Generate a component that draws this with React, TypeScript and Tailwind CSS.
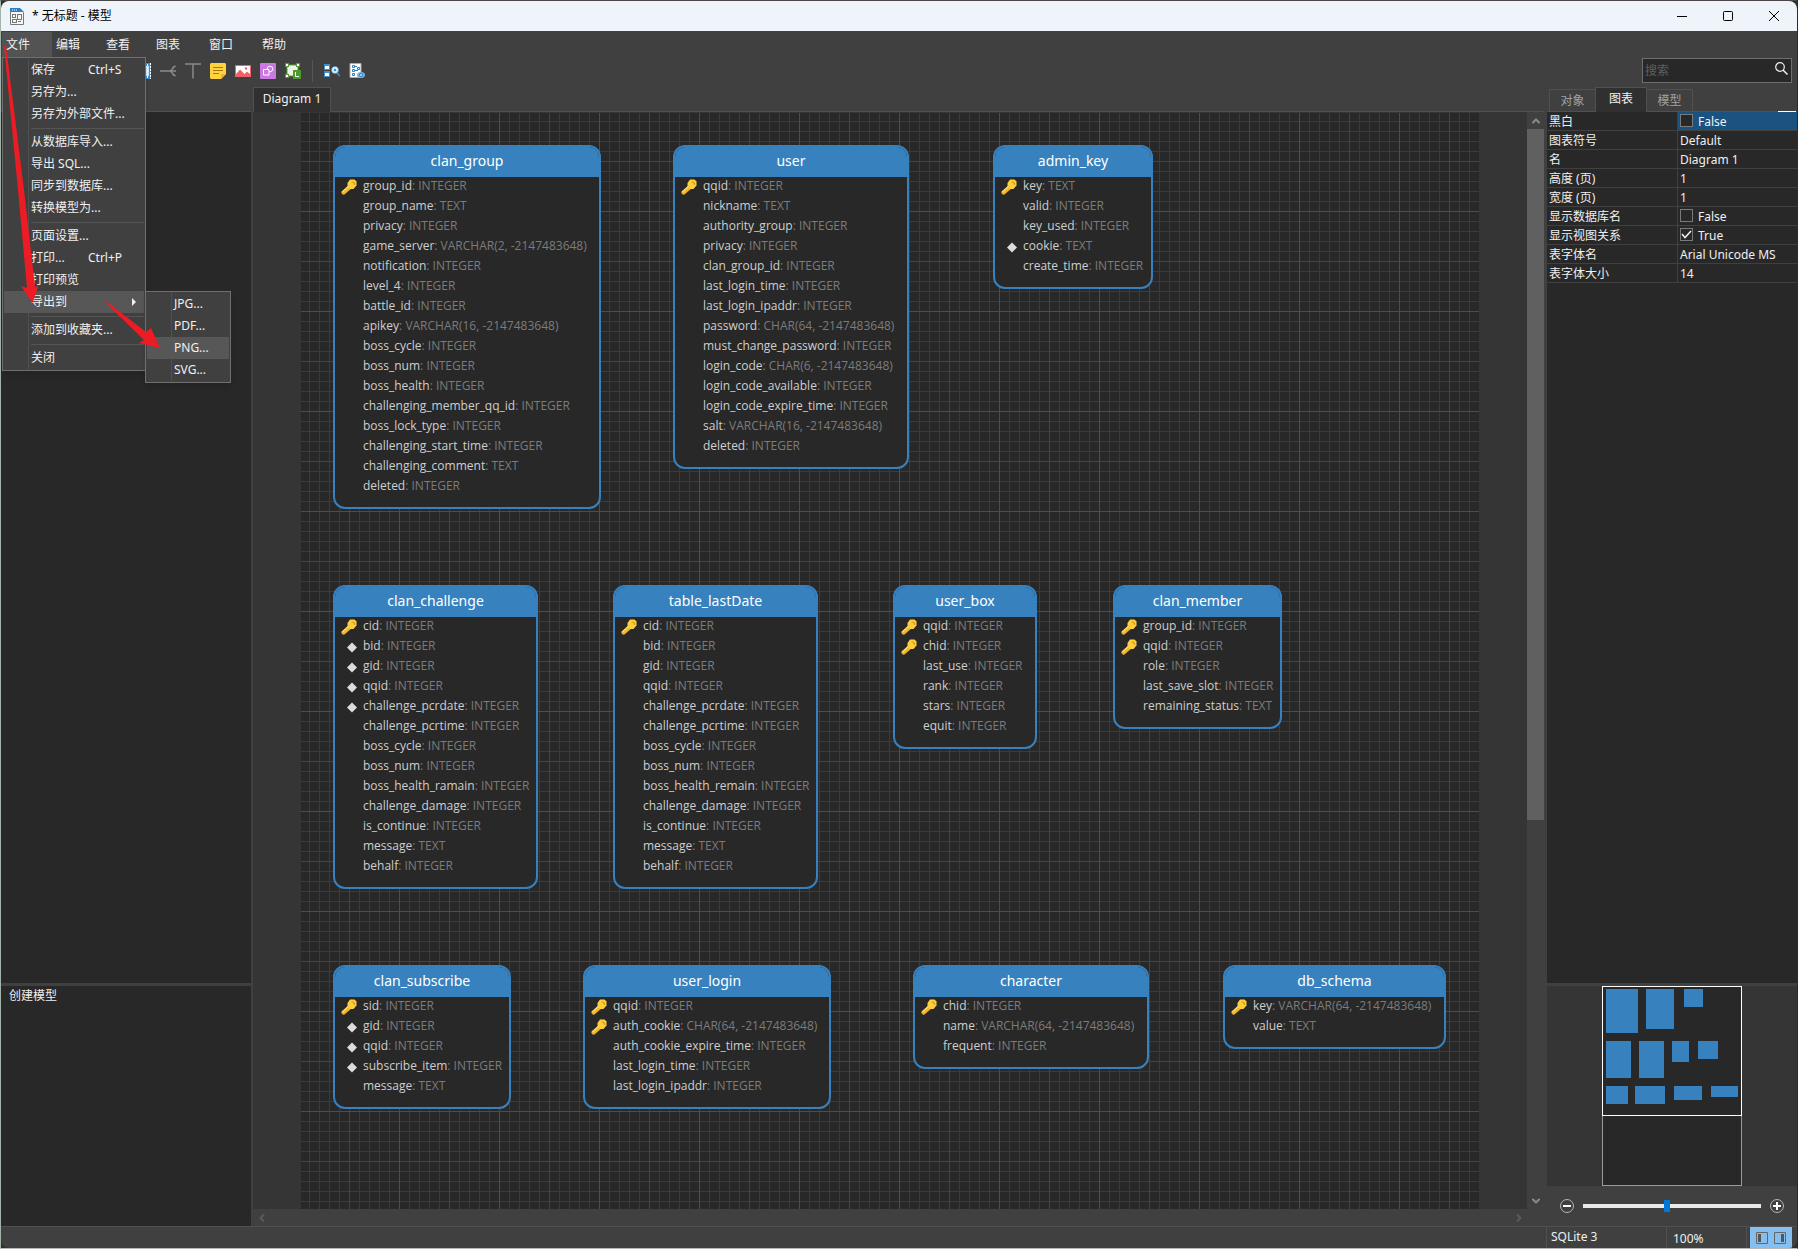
import type { ReactNode } from 'react';
import { ChevronDown, ChevronLeft, ChevronRight, ChevronUp } from 'lucide-react';

type Mark = 'key' | 'index' | '';
type Column = [name: string, type: string, mark?: Mark];

interface Entity {
  name: string;
  x: number;
  y: number;
  width: number;
  columns: Column[];
}

const INT = 'INTEGER';

const ENTITIES: Entity[] = [
  {
    name: 'clan_group', x: 32, y: 32, width: 268,
    columns: [
      ['group_id', INT, 'key'],
      ['group_name', 'TEXT'],
      ['privacy', INT],
      ['game_server', 'VARCHAR(2, -2147483648)'],
      ['notification', INT],
      ['level_4', INT],
      ['battle_id', INT],
      ['apikey', 'VARCHAR(16, -2147483648)'],
      ['boss_cycle', INT],
      ['boss_num', INT],
      ['boss_health', INT],
      ['challenging_member_qq_id', INT],
      ['boss_lock_type', INT],
      ['challenging_start_time', INT],
      ['challenging_comment', 'TEXT'],
      ['deleted', INT],
    ],
  },
  {
    name: 'user', x: 372, y: 32, width: 236,
    columns: [
      ['qqid', INT, 'key'],
      ['nickname', 'TEXT'],
      ['authority_group', INT],
      ['privacy', INT],
      ['clan_group_id', INT],
      ['last_login_time', INT],
      ['last_login_ipaddr', INT],
      ['password', 'CHAR(64, -2147483648)'],
      ['must_change_password', INT],
      ['login_code', 'CHAR(6, -2147483648)'],
      ['login_code_available', INT],
      ['login_code_expire_time', INT],
      ['salt', 'VARCHAR(16, -2147483648)'],
      ['deleted', INT],
    ],
  },
  {
    name: 'admin_key', x: 692, y: 32, width: 160,
    columns: [
      ['key', 'TEXT', 'key'],
      ['valid', INT],
      ['key_used', INT],
      ['cookie', 'TEXT', 'index'],
      ['create_time', INT],
    ],
  },
  {
    name: 'clan_challenge', x: 32, y: 472, width: 205,
    columns: [
      ['cid', INT, 'key'],
      ['bid', INT, 'index'],
      ['gid', INT, 'index'],
      ['qqid', INT, 'index'],
      ['challenge_pcrdate', INT, 'index'],
      ['challenge_pcrtime', INT],
      ['boss_cycle', INT],
      ['boss_num', INT],
      ['boss_health_ramain', INT],
      ['challenge_damage', INT],
      ['is_continue', INT],
      ['message', 'TEXT'],
      ['behalf', INT],
    ],
  },
  {
    name: 'table_lastDate', x: 312, y: 472, width: 205,
    columns: [
      ['cid', INT, 'key'],
      ['bid', INT],
      ['gid', INT],
      ['qqid', INT],
      ['challenge_pcrdate', INT],
      ['challenge_pcrtime', INT],
      ['boss_cycle', INT],
      ['boss_num', INT],
      ['boss_health_remain', INT],
      ['challenge_damage', INT],
      ['is_continue', INT],
      ['message', 'TEXT'],
      ['behalf', INT],
    ],
  },
  {
    name: 'user_box', x: 592, y: 472, width: 144,
    columns: [
      ['qqid', INT, 'key'],
      ['chid', INT, 'key'],
      ['last_use', INT],
      ['rank', INT],
      ['stars', INT],
      ['equit', INT],
    ],
  },
  {
    name: 'clan_member', x: 812, y: 472, width: 169,
    columns: [
      ['group_id', INT, 'key'],
      ['qqid', INT, 'key'],
      ['role', INT],
      ['last_save_slot', INT],
      ['remaining_status', 'TEXT'],
    ],
  },
  {
    name: 'clan_subscribe', x: 32, y: 852, width: 178,
    columns: [
      ['sid', INT, 'key'],
      ['gid', INT, 'index'],
      ['qqid', INT, 'index'],
      ['subscribe_item', INT, 'index'],
      ['message', 'TEXT'],
    ],
  },
  {
    name: 'user_login', x: 282, y: 852, width: 248,
    columns: [
      ['qqid', INT, 'key'],
      ['auth_cookie', 'CHAR(64, -2147483648)', 'key'],
      ['auth_cookie_expire_time', INT],
      ['last_login_time', INT],
      ['last_login_ipaddr', INT],
    ],
  },
  {
    name: 'character', x: 612, y: 852, width: 236,
    columns: [
      ['chid', INT, 'key'],
      ['name', 'VARCHAR(64, -2147483648)'],
      ['frequent', INT],
    ],
  },
  {
    name: 'db_schema', x: 922, y: 852, width: 223,
    columns: [
      ['key', 'VARCHAR(64, -2147483648)', 'key'],
      ['value', 'TEXT'],
    ],
  },
];

const MENUS = [
  { label: '文件', width: 'w-[50px]' },
  { label: '编辑', width: 'w-[50px]' },
  { label: '查看', width: 'w-[50px]' },
  { label: '图表', width: 'w-[53px]' },
  { label: '窗口', width: 'w-[53px]' },
  { label: '帮助', width: 'w-[53px]' },
];

interface MenuEntry {
  label: string;
  shortcut?: string;
  active?: boolean;
  submenu?: MenuEntry[];
}

const EXPORT_MENU: MenuEntry[] = [
  { label: 'JPG...' },
  { label: 'PDF...' },
  { label: 'PNG...', active: true },
  { label: 'SVG...' },
];

// null is a separator line
const FILE_MENU: (MenuEntry | null)[] = [
  { label: '保存', shortcut: 'Ctrl+S' },
  { label: '另存为...' },
  { label: '另存为外部文件...' },
  null,
  { label: '从数据库导入...' },
  { label: '导出 SQL...' },
  { label: '同步到数据库...' },
  { label: '转换模型为...' },
  null,
  { label: '页面设置...' },
  { label: '打印...', shortcut: 'Ctrl+P' },
  { label: '打印预览' },
  { label: '导出到', active: true, submenu: EXPORT_MENU },
  null,
  { label: '添加到收藏夹...' },
  null,
  { label: '关闭' },
];

const PROPERTIES: { label: string; value: string; checked?: boolean }[] = [
  { label: '黑白', value: 'False', checked: false },
  { label: '图表符号', value: 'Default' },
  { label: '名', value: 'Diagram 1' },
  { label: '高度 (页)', value: '1' },
  { label: '宽度 (页)', value: '1' },
  { label: '显示数据库名', value: 'False', checked: false },
  { label: '显示视图关系', value: 'True', checked: true },
  { label: '表字体名', value: 'Arial Unicode MS' },
  { label: '表字体大小', value: '14' },
];

export default function App() {
  return (
    <div className="h-screen bg-[#26332b] border border-t-[#4a4648] border-l-[#a3b5a8] border-r-[#2b2b2b] border-b-[#b9b9b9] font-['Noto_Sans','Noto_Sans_CJK_SC',sans-serif] text-xs text-[#f0f0f0]">
      <div className="h-full flex flex-col rounded-lg overflow-hidden bg-[#404040]">
        <TitleBar />
        <MenuBar />
        <Toolbar />
        <div className="flex-1 min-h-0 flex">
          <LeftPanel />
          <DiagramArea />
          <RightPanel />
        </div>
        <StatusBar />
      </div>
      <PointerArrows />
    </div>
  );
}

function TitleBar() {
  return (
    <header className="h-[30px] shrink-0 flex items-center bg-[#eef4f9] text-black pl-[9px]">
      <svg width="14" height="17" viewBox="0 0 14 17" className="mt-px">
        <path d="M.5 .5h9l4 4v12H.5z" fill="#f6f6f6" stroke="#777" />
        <path d="M0 0h10l4 4H0z" fill="#2a7fc4" />
        <path d="M2 2h1M4 2h1M6 2h1" stroke="#fff" />
        <g fill="none" stroke="#777">
          <rect x="2.5" y="6.5" width="3" height="3" />
          <rect x="7.5" y="6.5" width="4" height="5" />
          <rect x="2.5" y="11.5" width="4" height="3" />
          <path d="M8 13.5h3" />
        </g>
      </svg>
      <h1 className="ml-2">* 无标题 - 模型</h1>
      <div className="ml-auto flex h-full">
        <button aria-label="最小化" className="w-[46px] flex items-center justify-center">
          <svg width="10" height="10"><path d="M0 5.5h10" stroke="#000" /></svg>
        </button>
        <button aria-label="最大化" className="w-[46px] flex items-center justify-center">
          <svg width="10" height="10"><rect x=".5" y=".5" width="9" height="9" rx="1" fill="none" stroke="#000" /></svg>
        </button>
        <button aria-label="关闭窗口" className="w-[46px] flex items-center justify-center">
          <svg width="10" height="10"><path d="M0 0l10 10M10 0L0 10" stroke="#000" /></svg>
        </button>
      </div>
    </header>
  );
}

function MenuBar() {
  return (
    <nav className="h-[26px] shrink-0 flex pt-px pl-px">
      {MENUS.map((menu, i) => (
        <div key={menu.label} className="relative">
          <button className={`${menu.width} h-full pl-1 text-left ${i === 0 ? 'bg-[#535353]' : ''}`}>
            {menu.label}
          </button>
          {i === 0 && (
            <div className="absolute left-0 top-full z-20 w-[144px]">
              <Menu items={FILE_MENU} />
            </div>
          )}
        </div>
      ))}
    </nav>
  );
}

function Menu({ items }: { items: (MenuEntry | null)[] }) {
  return (
    <ul className="relative border border-[#707070] bg-[#404040] p-px shadow-md">
      <li aria-hidden className="absolute inset-y-px left-[25px] w-px bg-[#505050]" />
      {items.map((item, i) =>
        item ? (
          <li key={item.label} className={`relative ${item.active ? 'bg-[#575757]' : ''}`}>
            <button className="h-[22px] w-full flex items-center pl-[27px] text-left whitespace-nowrap">
              {item.label}
              {item.shortcut && <span className="ml-auto w-14">{item.shortcut}</span>}
              {item.submenu && (
                <svg width="4" height="8" className="ml-auto mr-2"><path d="M0 0l4 4-4 4z" fill="#f0f0f0" /></svg>
              )}
            </button>
            {item.submenu && (
              <div className="absolute left-full top-0 ml-px w-[86px]">
                <Menu items={item.submenu} />
              </div>
            )}
          </li>
        ) : (
          <li key={i} className="h-[6px] flex items-center pl-[27px]">
            <hr className="w-full border-[#555]" />
          </li>
        ),
      )}
    </ul>
  );
}

function ToolButton({ label, children }: { label: string; children: ReactNode }) {
  return (
    <button aria-label={label} className="size-4">
      <svg width="16" height="16" viewBox="0 0 16 16" fill="none">{children}</svg>
    </button>
  );
}

function Toolbar() {
  return (
    <div className="h-[30px] shrink-0 flex items-start justify-between pl-[134px] pr-[5px]">
      <div className="flex items-center gap-[9px] h-7">
        <ToolButton label="表">
          <path d="M0 0h16v16H0z" fill="#3d8fd1" />
          <path d="M2 3h12v10H2z" fill="#cfe6f8" />
          <path d="M12.500 1v14M15.500 0v16" stroke="#fff" strokeDasharray="2 1" />
        </ToolButton>
        <ToolButton label="关系">
          <path d="M0 8h16M10 8l3-2.500V4.500L15.500 3M10 8l3 2.500v1l2.500 1.500" stroke="#8a8a8a" strokeWidth="1.500" />
        </ToolButton>
        <ToolButton label="文本">
          <path d="M0 1h16M8 1v14.500" stroke="#8a8a8a" strokeWidth="1.500" />
        </ToolButton>
        <ToolButton label="注释">
          <path d="M1 0h14l1 1v10l-5 5H1l-1-1V1z" fill="#ffd23e" />
          <path d="M11 16v-4l1-1h4z" fill="#eab526" />
          <path d="M3 4.500h10M3 7.500h10M3 10.500h6" stroke="#a37a10" />
        </ToolButton>
        <ToolButton label="图像">
          <path d="M0 2h16v12H0z" fill="#f2606a" />
          <path d="M1 3h14v8l-3-2.500L9.500 11 5 6.500 1 11z" fill="#fff" />
          <circle cx="11" cy="5.500" r="1.200" fill="#f2606a" />
        </ToolButton>
        <ToolButton label="图形">
          <rect width="16" height="16" rx="1" fill="#cb78e3" />
          <circle cx="10" cy="6" r="2.800" stroke="#fff" />
          <path d="M3.500 6.500h5.500v5.500H3.500z" fill="#cb78e3" stroke="#fff" />
        </ToolButton>
        <ToolButton label="层">
          <path d="M2 2h11v11H2z" fill="#eef3e8" stroke="#5a9a3a" />
          <path d="M0 0h4v4H0zM11 0h4v4h-4zM0 11h4v4H0z" fill="#5a9a3a" />
          <path d="M1 1h2v2H1zM12 1h2v2h-2zM1 12h2v2H1z" fill="#fff" />
          <path d="M8 7h8v9H8z" fill="#4f9a2c" />
          <path d="M10.500 9v4.500H14" stroke="#fff" />
        </ToolButton>
        <span className="w-[5px] h-[22px] flex justify-center"><span className="w-px bg-[#555]" /></span>
        <ToolButton label="自动调整">
          <path d="M0 1h6v6H0zM0 8h6v6H0z" fill="#3d8fd1" />
          <path d="M1 3h4v3H1zM1 10h4v3H1z" fill="#fff" />
          <circle cx="11" cy="7" r="3.500" fill="#d9ecfa" stroke="#3d8fd1" strokeDasharray="2 1" />
          <circle cx="11" cy="7" r="1.200" fill="#3d8fd1" />
          <path d="M13 10l3 3" stroke="#3d8fd1" strokeWidth="1.500" />
        </ToolButton>
        <ToolButton label="预览">
          <path d="M1 .500h11v14H1z" fill="#fff" stroke="#aaa" />
          <g stroke="#2f7fbf">
            <path d="M3.500 2.500h2v2h-2zM3.500 6.500h2v2h-2zM3.500 10.500h2v2h-2zM8.500 4.500h2v2h-2z" />
            <path d="M6 3.500h2M6 7.500h3" />
          </g>
          <ellipse cx="12" cy="12" rx="4" ry="3" fill="#6db2e6" />
          <circle cx="12" cy="12" r="1.500" fill="#d9ecfa" stroke="#2f7fbf" />
        </ToolButton>
      </div>
      <label className="mt-px flex w-[150px] h-[25px] border border-[#6e6e6e] bg-[#282828]">
        <input type="text" aria-label="搜索" placeholder="搜索" className="min-w-0 flex-1 bg-transparent pl-0.5 outline-none placeholder:text-[#5f5f5f]" />
        <svg width="13" height="13" viewBox="0 0 13 13" className="mt-[3px] mr-[3px]" fill="none" stroke="#f0f0f0">
          <circle cx="5" cy="5" r="4.300" strokeWidth="1.200" />
          <path d="M8 8l4.500 4.500" strokeWidth="1.500" />
        </svg>
      </label>
    </div>
  );
}

function LeftPanel() {
  return (
    <aside className="w-[250px] shrink-0 mr-0.5 flex flex-col">
      <div className="h-[25px] shrink-0 border-b border-[#505050]" />
      <div className="flex-1 bg-[#282828]" />
      <section className="h-[243px] shrink-0 border-t-[3px] border-[#404040] bg-[#282828] pt-0.5">
        <h2 className="pl-2">创建模型</h2>
      </section>
    </aside>
  );
}

function DiagramArea() {
  return (
    <main className="flex-1 min-w-0 flex flex-col">
      <div className="h-[25px] shrink-0 flex">
        <button className="w-[78px] border border-b-0 border-[#505050] bg-[#303030] pb-0.5">Diagram 1</button>
        <div className="flex-1 border-b border-[#505050]" />
      </div>
      <div className="flex-1 min-h-0 flex">
        <div className="flex-1 min-w-0 flex px-12 pt-px bg-[#353535]">
          <div className="relative flex-1 overflow-hidden bg-[#282828]">
            <Grid />
            {ENTITIES.map((entity) => (
              <EntityCard key={entity.name} entity={entity} />
            ))}
          </div>
        </div>
        <div className="w-[17px] shrink-0 flex flex-col">
          <button aria-label="向上滚动" className="h-[17px] flex items-center justify-center text-[#8a8a8a]">
            <ChevronUp size={12} strokeWidth={4} />
          </button>
          <div className="flex-1">
            <div className="h-[65%] bg-[#606060]" />
          </div>
          <button aria-label="向下滚动" className="h-[17px] flex items-center justify-center text-[#8a8a8a]">
            <ChevronDown size={12} strokeWidth={4} />
          </button>
        </div>
      </div>
      <div className="h-[17px] shrink-0 flex items-center justify-between pl-[3px] pr-[19px] text-[#5a5a5a]">
        <button aria-label="向左滚动"><ChevronLeft size={12} strokeWidth={4} /></button>
        <button aria-label="向右滚动"><ChevronRight size={12} strokeWidth={4} /></button>
      </div>
    </main>
  );
}

function Grid() {
  return (
    <svg className="absolute inset-0 size-full" shapeRendering="crispEdges">
      <defs>
        <pattern id="grid" x="-2" y="-2" width="100" height="100" patternUnits="userSpaceOnUse">
          <g fill="none" stroke="#3b3b3b">
            {[10, 20, 30, 40, 60, 70, 80, 90].map((n) => (
              <path key={n} d={`M${n + 0.5} 0v100M0 ${n + 0.5}h100`} />
            ))}
            <path d="M50.500 0v100M0 50.500h100" stroke="#444" />
            <path d="M.500 0v100M0 .500h100" stroke="#4d4d4d" />
          </g>
        </pattern>
      </defs>
      <rect width="100%" height="100%" fill="url(#grid)" />
    </svg>
  );
}

function EntityCard({ entity }: { entity: Entity }) {
  return (
    <article
      className="absolute rounded-xl border-2 border-[#3782be] bg-[#282828] pb-2.5 overflow-hidden"
      style={{ left: entity.x, top: entity.y, width: entity.width }}
    >
      <h3 className="h-[30px] bg-[#3782be] text-center text-sm leading-7 text-white">{entity.name}</h3>
      <ul>
        {entity.columns.map(([name, type, mark]) => (
          <li key={name} className="h-5 flex items-center whitespace-nowrap font-['Open_Sans','Noto_Sans',sans-serif] leading-[18px]">
            <span className="w-7 shrink-0 flex pl-1.5">
              {mark === 'key' && <KeyIcon />}
              {mark === 'index' && <IndexIcon />}
            </span>
            <span className="text-[#cfcfcf] pb-0.5">
              {name}<span className="text-[#7c7c7c]">: {type}</span>
            </span>
          </li>
        ))}
      </ul>
    </article>
  );
}

function KeyIcon() {
  return (
    <svg width="16" height="16" viewBox="0 0 16 16">
      <path d="M8 6l3 3-7.500 6.500-1.500.300L.300 14l.200-1.500z" fill="#f0b429" />
      <path d="M8.500 6.500L1.500 13" stroke="#ffd95a" strokeWidth="1.500" />
      <path d="M9 .500h4.500l2 2V6.500L12.500 10H9L6.500 7.500V4z" fill="#ffcf3d" />
      <path d="M10.500 3h1.500l1.500 1.500V6" fill="none" stroke="#d9980f" strokeWidth="1.200" />
    </svg>
  );
}

function IndexIcon() {
  return (
    <svg width="16" height="16" viewBox="0 0 16 16">
      <path d="M11 3.500L16 8.500 11 13.500 6 8.500z" fill="#dcdcdc" />
    </svg>
  );
}

function RightPanel() {
  return (
    <aside className="w-[250px] shrink-0 ml-[3px] flex flex-col">
      <div className="h-[25px] shrink-0 flex items-end border-b border-[#505050] pl-0.5 text-[#a0a0a0]">
        <button className="w-[46px] h-[22px] border-l border-t border-[#505050]">对象</button>
        <button className="w-[52px] h-[25px] -mb-px border border-b-0 border-[#505050] bg-[#303030] text-[#f0f0f0] pb-0.5">图表</button>
        <button className="w-[46px] h-[22px] border-r border-t border-[#505050]">模型</button>
        <span className="ml-auto -mb-px mr-px w-[18px] h-px bg-white" />
      </div>
      <div className="flex-1 min-h-0 bg-[#282828]">
        <table className="w-full table-fixed border-separate border-spacing-0 leading-4">
          <tbody>
            {PROPERTIES.map((prop, i) => (
              <tr key={prop.label}>
                <th scope="row" className="w-[130px] h-[19px] p-0 pl-0.5 pt-0.5 border-b border-[#404040] text-left font-normal">{prop.label}</th>
                <td className={`h-[19px] p-0 pl-0.5 pt-0.5 border-b border-l border-[#404040] ${i === 0 ? 'bg-[#1a5280]' : ''}`}>
                  {prop.checked === undefined ? (
                    prop.value
                  ) : (
                    <label className="flex items-start gap-[5px]">
                      <span className="relative flex">
                        <input type="checkbox" defaultChecked={prop.checked} className="peer appearance-none size-[13px] border border-[#7a7a7a] bg-[#282828]" />
                        <svg width="13" height="13" className="hidden peer-checked:block absolute inset-0 pointer-events-none">
                          <path d="M2 6l3 3.500L11 3" fill="none" stroke="#f0f0f0" strokeWidth="1.500" />
                        </svg>
                      </span>
                      {prop.value}
                    </label>
                  )}
                </td>
              </tr>
            ))}
          </tbody>
        </table>
      </div>
      <div className="mt-[3px] h-[200px] shrink-0 flex justify-center bg-[#353535]">
        <Overview />
      </div>
      <div className="h-10 shrink-0 flex items-center gap-[9px] px-[13px]">
        <button aria-label="缩小">
          <svg width="14" height="14" fill="none"><circle cx="7" cy="7" r="6.500" stroke="#b5b5b5" /><path d="M3 7h8" stroke="#fff" strokeWidth="2" /></svg>
        </button>
        <input
          type="range"
          aria-label="缩放"
          defaultValue={47}
          className="min-w-0 flex-1 appearance-none h-1 bg-[#e7eaea] [&::-webkit-slider-thumb]:appearance-none [&::-webkit-slider-thumb]:w-1.5 [&::-webkit-slider-thumb]:h-3 [&::-webkit-slider-thumb]:bg-[#0078d7]"
        />
        <button aria-label="放大">
          <svg width="14" height="14" fill="none"><circle cx="7" cy="7" r="6.500" stroke="#b5b5b5" /><path d="M3 7h8M7 3v8" stroke="#fff" strokeWidth="2" /></svg>
        </button>
      </div>
    </aside>
  );
}

function Overview() {
  const scale = 0.118;
  return (
    <svg width="140" height="200">
      <rect x=".5" y=".5" width="139" height="199" fill="#282828" stroke="#9a9a9a" />
      {ENTITIES.map((e) => (
        <rect
          key={e.name}
          x={Math.round(e.x * scale)}
          y={Math.round(e.y * scale) - 1}
          width={Math.ceil(e.width * scale)}
          height={Math.ceil((44 + e.columns.length * 20) * scale) + 1}
          fill="#3782be"
        />
      ))}
      <rect x=".5" y=".5" width="139" height="129" fill="none" stroke="#fff" />
    </svg>
  );
}

function StatusBar() {
  return (
    <footer className="h-[22px] shrink-0 flex justify-end border-t border-[#505050]">
      <div className="w-[120px] border-l border-[#505050] pl-1 leading-5">SQLite 3</div>
      <div className="w-20 border-l border-[#505050] pl-1.5 leading-6">100%</div>
      <div className="border-l border-[#505050] pl-[3px] pr-[5px] flex">
        <div className="w-[42px] flex items-center justify-between px-1.5 bg-[#84bfef]">
          <button aria-label="左侧面板">
            <svg width="12" height="12"><path d="M.5 .5h11v11H.5z" fill="none" stroke="#666" /><path d="M2 2h3v8H2z" fill="#555" /></svg>
          </button>
          <button aria-label="右侧面板">
            <svg width="12" height="12"><path d="M.5 .5h11v11H.5z" fill="none" stroke="#666" /><path d="M7 2h3v8H7z" fill="#555" /></svg>
          </button>
        </div>
      </div>
    </footer>
  );
}

function PointerArrows() {
  return (
    <svg width="170" height="360" className="absolute left-0 top-0 z-30 pointer-events-none" fill="#ed1c24">
      <path d="M4 46L6 46L24 190L35 287L38.500 285.500L32.500 303L21 286L27 288L18 190Z" />
      <path d="M104 301L107 302L146 332L151 328L160 348L139 343L144 340Z" />
    </svg>
  );
}
